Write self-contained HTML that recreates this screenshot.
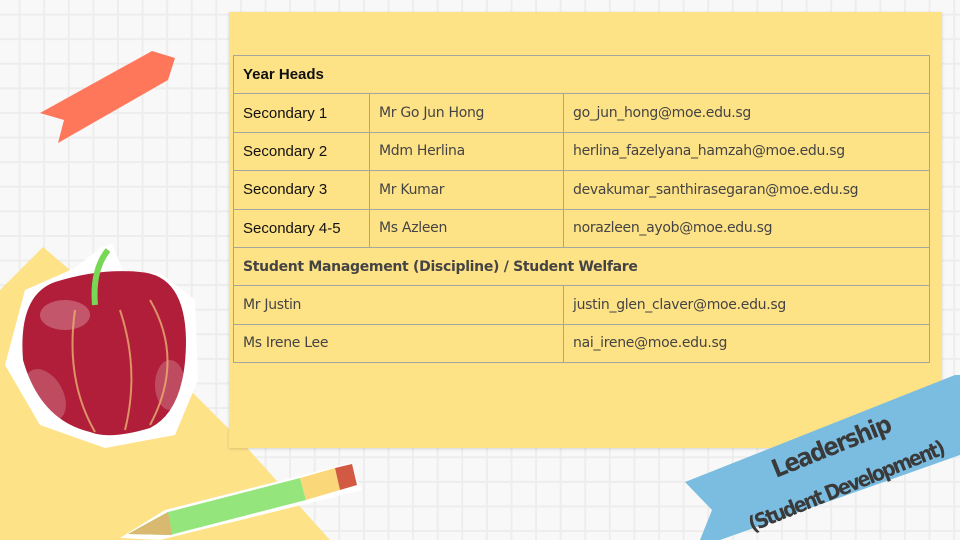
<!DOCTYPE html>
<html><head><meta charset="utf-8"><style>
body{margin:0;width:960px;height:540px;overflow:hidden;position:relative;font-family:"Liberation Sans",sans-serif;
background-color:#f8f8f8;
background-image:linear-gradient(#ededed 2px,transparent 2px),linear-gradient(90deg,#ededed 2px,transparent 2px);
background-size:24.6px 24.6px;background-position:-6px -11px;}
.card{position:absolute;left:229px;top:12px;width:713px;height:436px;background:#fee286;box-shadow:0 1px 3px rgba(0,0,0,.15);}
table{position:absolute;left:233px;top:55px;border-collapse:collapse;width:697px;}
td{border:1px solid #a6a6a0;height:37.4px;padding:0 0 0 9px;font-size:15px;color:#111;}
td.c{color:#444;font-family:"DejaVu Sans",sans-serif;font-size:14px;letter-spacing:-0.3px}
tr.h td{font-weight:bold;}
</style></head><body>
<svg width="960" height="540" style="position:absolute;left:0;top:0">
<polygon points="152,51 175,58 168,80 58,143 64,120 40,113" fill="#ff775a"/>
<polygon points="0,290 43,247 70,270 200,400 240,440 330,540 0,540" fill="#fde287"/>
</svg>
<div class="card"></div>
<table>
<tr class="h"><td colspan="3">Year Heads</td></tr>
<tr><td style="width:126px">Secondary 1</td><td class="c" style="width:184px">Mr Go Jun Hong</td><td class="c">go_jun_hong@moe.edu.sg</td></tr>
<tr><td>Secondary 2</td><td class="c">Mdm Herlina</td><td class="c">herlina_fazelyana_hamzah@moe.edu.sg</td></tr>
<tr><td>Secondary 3</td><td class="c">Mr Kumar</td><td class="c">devakumar_santhirasegaran@moe.edu.sg</td></tr>
<tr><td>Secondary 4-5</td><td class="c">Ms Azleen</td><td class="c">norazleen_ayob@moe.edu.sg</td></tr>
<tr><td colspan="3" class="c" style="font-weight:bold">Student Management (Discipline) / Student Welfare</td></tr>
<tr><td colspan="2" class="c">Mr Justin</td><td class="c">justin_glen_claver@moe.edu.sg</td></tr>
<tr><td colspan="2" class="c">Ms Irene Lee</td><td class="c">nai_irene@moe.edu.sg</td></tr>
</table>
<svg width="960" height="540" style="position:absolute;left:0;top:0">
<!-- apple -->
<path d="M100,248 L112,244 L125,275 L160,273 L195,300 L198,380 L175,435 L105,448 L40,425 L5,365 L25,290 L75,268 Z" fill="#fff"/>
<path d="M55,282 Q100,268 140,272 Q185,275 186,340 Q186,410 150,428 Q110,440 90,432 Q40,420 23,360 Q18,295 55,282 Z" fill="#b01e3a"/>
<ellipse cx="65" cy="315" rx="25" ry="15" fill="#fff" opacity=".25"/>
<ellipse cx="45" cy="395" rx="18" ry="28" fill="#fff" opacity=".2" transform="rotate(-30 45 395)"/>
<ellipse cx="170" cy="385" rx="15" ry="25" fill="#fff" opacity=".2"/>
<path d="M75,310 Q65,380 95,432 M120,310 Q140,370 125,430 M150,300 Q185,360 150,425" stroke="#e8b070" stroke-width="2" fill="none" opacity=".8"/>
<path d="M95,305 Q92,270 108,250" stroke="#78d855" stroke-width="6" fill="none"/>
<!-- pencil -->
<path d="M120,538 L165,510 L350,463 L362,490 L180,535 L160,540 Z" fill="#fff"/>
<path d="M128,534 L168,512 L300,478 L306,500 L170,535 Z" fill="#95e57d"/>
<path d="M128,534 L168,512 L172,535 Z" fill="#d9b870"/>
<path d="M300,478 L335,468 L340,490 L306,500 Z" fill="#fad87a"/>
<path d="M335,468 L352,464 L357,485 L340,490 Z" fill="#d25a42"/>
<!-- blue ribbon -->
<polygon points="955,375 960,375 960,455 720,540 700,540 712,510 685,482" fill="#7bbde0"/>
<text x="0" y="0" transform="translate(776,478) rotate(-22)" font-family="DejaVu Sans" font-weight="bold" font-size="25" fill="#3a3a3a" letter-spacing="-1.5" style="font-stretch:condensed">Leadership</text>
<text x="0" y="0" transform="translate(752,532) rotate(-22)" font-family="DejaVu Sans" font-weight="bold" font-size="21" fill="#3a3a3a" letter-spacing="-2" style="font-stretch:condensed">(Student Development)</text>
</svg>
</body></html>
